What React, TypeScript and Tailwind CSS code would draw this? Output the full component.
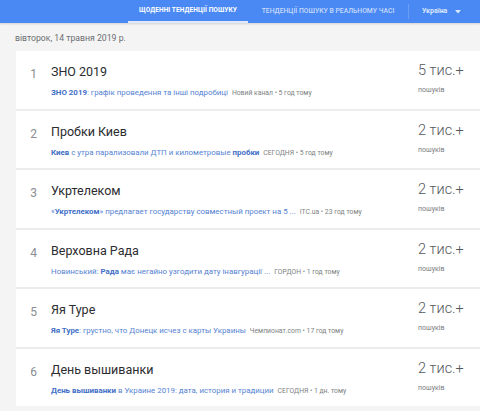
import React from 'react';

interface Trend {
  rank: number;
  title: string;
  parts: { text: string; bold?: boolean }[];
  source: string;
  count: string;
}

const trends: Trend[] = [
  {
    rank: 1,
    title: 'ЗНО 2019',
    parts: [{ text: 'ЗНО 2019', bold: true }, { text: ': графік проведення та інші подробиці' }],
    source: 'Новий канал • 5 год тому',
    count: '5 тис.+',
  },
  {
    rank: 2,
    title: 'Пробки Киев',
    parts: [
      { text: 'Киев', bold: true },
      { text: ' с утра парализовали ДТП и километровые ' },
      { text: 'пробки', bold: true },
    ],
    source: 'СЕГОДНЯ • 5 год тому',
    count: '2 тис.+',
  },
  {
    rank: 3,
    title: 'Укртелеком',
    parts: [
      { text: '«' },
      { text: 'Укртелеком', bold: true },
      { text: '» предлагает государству совместный проект на 5 ...' },
    ],
    source: 'ITC.ua • 23 год тому',
    count: '2 тис.+',
  },
  {
    rank: 4,
    title: 'Верховна Рада',
    parts: [
      { text: 'Новинський: ' },
      { text: 'Рада', bold: true },
      { text: ' має негайно узгодити дату інавгурації ...' },
    ],
    source: 'ГОРДОН • 1 год тому',
    count: '2 тис.+',
  },
  {
    rank: 5,
    title: 'Яя Туре',
    parts: [{ text: 'Яя Туре', bold: true }, { text: ': грустно, что Донецк исчез с карты Украины' }],
    source: 'Чемпионат.com • 17 год тому',
    count: '2 тис.+',
  },
  {
    rank: 6,
    title: 'День вышиванки',
    parts: [
      { text: 'День вышиванки', bold: true },
      { text: ' в Украине 2019: дата, история и традиции' },
    ],
    source: 'СЕГОДНЯ • 1 дн. тому',
    count: '2 тис.+',
  },
];

export default function App() {
  return (
    <div className="w-[480px] h-[411px] overflow-hidden bg-[#f4f4f4] font-['Roboto',sans-serif]">
      {/* Top bar */}
      <div className="h-[23px] bg-[#4a89f3] flex items-stretch shadow-[0_1px_2px_rgba(0,0,0,0.15)]">
        <div className="w-[128px]" />
        <div className="w-[120px] flex items-center justify-center border-b-[2px] border-[#dfe9fb] text-[6.5px] font-bold text-white tracking-[0.1px]">
          ЩОДЕННІ ТЕНДЕНЦІЇ ПОШУКУ
        </div>
        <div className="w-[160px] flex items-center justify-center text-[6.8px] font-medium text-[#c7dafc]">
          ТЕНДЕНЦІЇ ПОШУКУ В РЕАЛЬНОМУ ЧАСІ
        </div>
        <div className="flex items-center">
          <div className="w-px h-[15px] bg-[#6a9ef5]" />
          <span className="ml-[13px] text-[7px] font-bold text-[#dbe7fd]">Україна</span>
          <svg className="ml-[8px] w-[6px] h-[4px]" viewBox="0 0 6 4">
            <path d="M0 0 L6 0 L3 3.5 Z" fill="#dbe7fd" />
          </svg>
        </div>
      </div>

      {/* Date */}
      <div className="pl-[15px] pt-[9px] h-[28px] text-[8.7px] text-[#6b6e72]">вівторок, 14 травня 2019 р.</div>

      {/* List */}
      <div className="ml-4 flex flex-col gap-[2px] bg-[#ececec]">
        {trends.map((t) => (
          <div key={t.rank} className="h-[57.5px] bg-white flex items-stretch">
            <div className="w-[35px] pt-[14px] text-right pr-[14px] text-[12px] text-[#8a8d91]">{t.rank}</div>
            <div className="flex-1 min-w-0 pt-[13px]">
              <div className="text-[12.5px] text-[#2b2d30] leading-[16px]">{t.title}</div>
              <div className="mt-[7px] flex items-baseline whitespace-nowrap">
                <span className="text-[7.9px] text-[#5583d2]">
                  {t.parts.map((p, i) =>
                    p.bold ? (
                      <span key={i} className="font-bold text-[#3f6fc6]">
                        {p.text}
                      </span>
                    ) : (
                      <span key={i}>{p.text}</span>
                    )
                  )}
                </span>
                <span className="ml-[4px] text-[6.8px] text-[#7d7f82]">{t.source}</span>
              </div>
            </div>
            <div className="w-[62px] pt-[10px]">
              <div className="text-[14.5px] font-light text-[#55585c] leading-[20px]">{t.count}</div>
              <div className="mt-[4px] text-[7px] text-[#7a7d80]">пошуків</div>
            </div>
          </div>
        ))}
      </div>
    </div>
  );
}
